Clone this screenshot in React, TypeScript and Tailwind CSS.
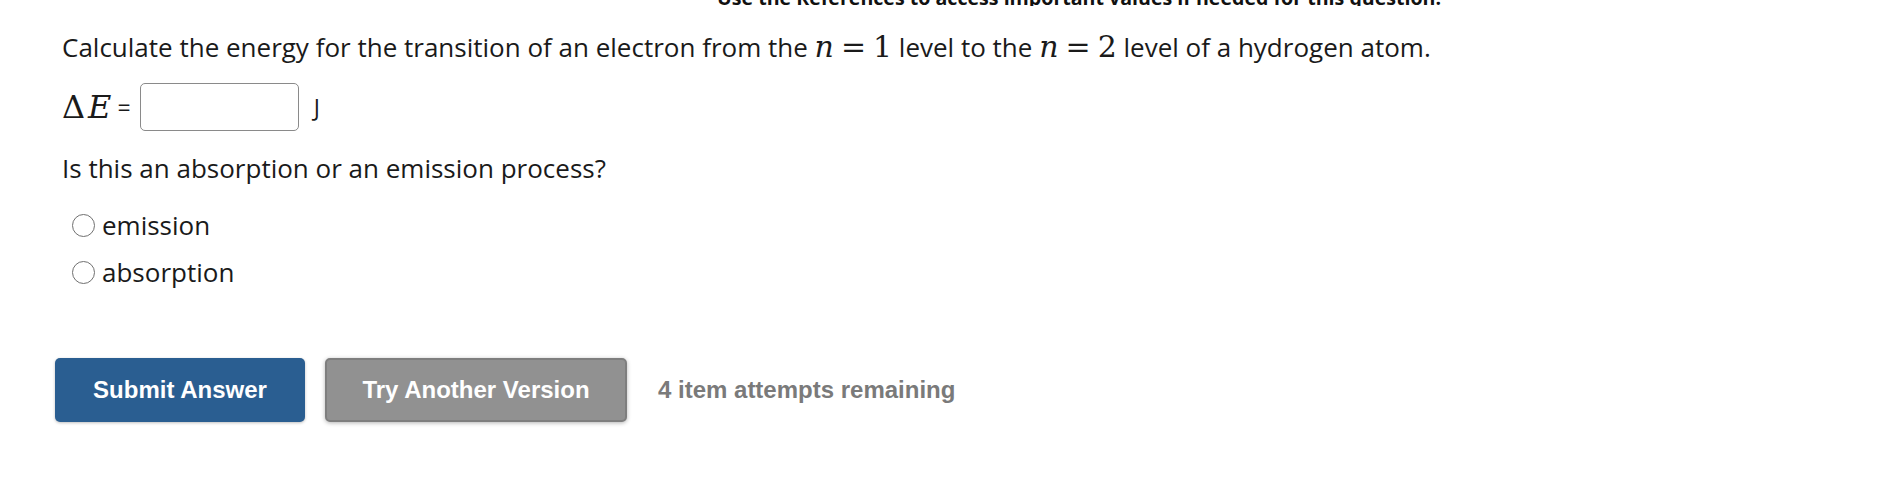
import React from "react";

const sans = { fontFamily: '"Open Sans", "Noto Sans", sans-serif' };
const serif = { fontFamily: '"DejaVu Serif", "Liberation Serif", serif' };

function Eq({ v }: { v: string }) {
  return (
    <span className="text-[30px] leading-none" style={serif}>
      <span className="italic">n</span>
      <span className="mx-[7px]">=</span>
      <span>{v}</span>
    </span>
  );
}

function Radio({ label }: { label: string }) {
  return (
    <label className="flex h-[47px] items-center">
      <span className="ml-[10px] h-[23px] w-[23px] rounded-full border-[1.5px] border-[#707070] bg-white" />
      <span className="ml-[7px] text-[26px] text-[#1a1a1a]">{label}</span>
    </label>
  );
}

export default function App() {
  return (
    <div className="h-[493px] w-full overflow-hidden bg-white" style={sans}>
      <div className="h-[6px] overflow-hidden">
        <div className="mt-[-12px] pl-[717px] text-[19.6px] font-bold leading-none text-[#111] whitespace-nowrap">
          Use the References to access important values if needed for this question.
        </div>
      </div>

      <div className="pl-[62px]">
        <p className="mt-[26px] h-[30px] text-[26px] leading-[30px] text-[#1a1a1a] whitespace-nowrap">
          Calculate the energy for the transition of an electron from the <Eq v="1" /> level to the <Eq v="2" /> level of a hydrogen atom.
        </p>

        <div className="mt-[21px] flex h-[48px] items-center text-[23px] text-[#1a1a1a]">
          <span className="text-[32px] leading-none tracking-[3px]" style={serif}>
            Δ<span className="italic">E</span>
          </span>
          <span className="ml-[3px]">=</span>
          <input
            type="text"
            aria-label="delta E"
            className="ml-[9px] h-[48px] w-[159px] rounded-[5px] border-[1.5px] border-[#8a8a8a] bg-white outline-none"
          />
          <span className="ml-[15px]">J</span>
        </div>

        <p className="mt-[22px] h-[30px] text-[26px] leading-[30px] text-[#1a1a1a]">
          Is this an absorption or an emission process?
        </p>

        <div className="mt-[19px] flex flex-col">
          <Radio label="emission" />
          <Radio label="absorption" />
        </div>
      </div>

      <div
        className="mt-[62px] flex items-center pl-[55px]"
        style={{ fontFamily: '"Liberation Sans", Arial, sans-serif' }}
      >
        <button className="h-[64px] w-[250px] rounded-[5px] bg-[#2a5e91] text-[24px] font-bold text-white shadow-[0_1px_3px_rgba(0,0,0,0.25)]">
          Submit Answer
        </button>
        <button className="ml-[20px] h-[64px] w-[302px] rounded-[5px] border-[2px] border-[#7e7e7e] bg-[#919191] text-[24px] font-bold text-white shadow-[0_1px_4px_rgba(0,0,0,0.3)]">
          Try Another Version
        </button>
        <span className="ml-[31px] text-[24px] font-bold text-[#7a7a7a]">4 item attempts remaining</span>
      </div>
    </div>
  );
}
